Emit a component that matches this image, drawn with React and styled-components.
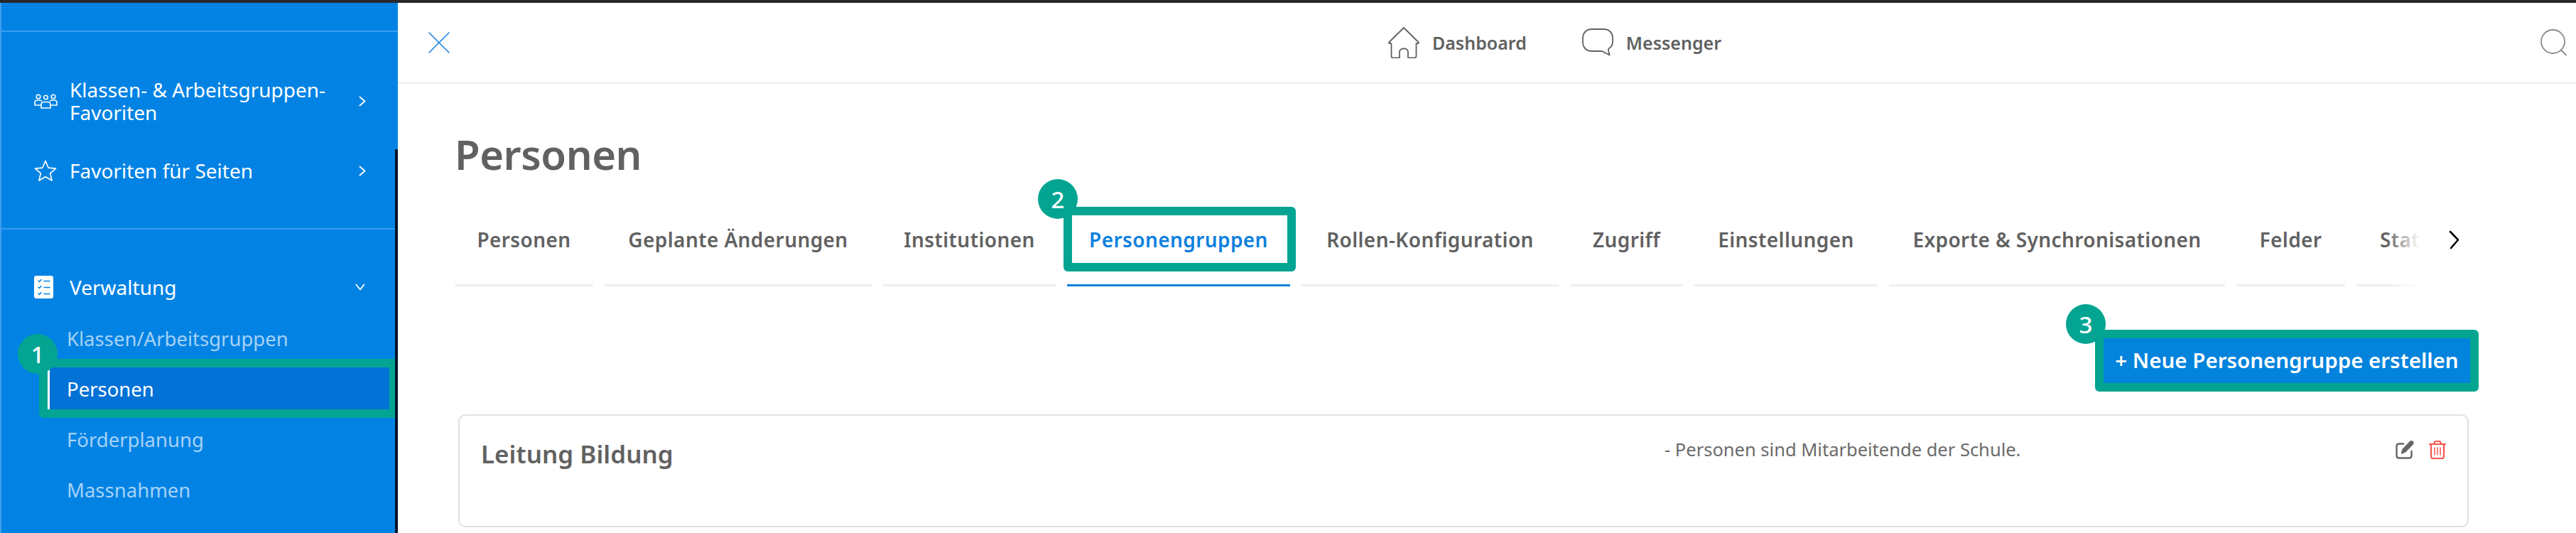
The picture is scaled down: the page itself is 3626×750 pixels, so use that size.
import React from "react";
import styled, { createGlobalStyle } from "styled-components";

const Global = createGlobalStyle`
  html, body { margin: 0; padding: 0; background: #fff; }
  body { width: 3626px; height: 750px; overflow: hidden; font-family: "Noto Sans", "Open Sans", sans-serif; }
  * { box-sizing: border-box; }
`;

const GREEN = "#03a592";
const INK = "#616161";
const BLUE = "#0283e4";

const Page = styled.div`
  width: 3626px; height: 750px; display: flex; flex-direction: column; overflow: hidden;
`;
const TopEdge = styled.div`height: 4px; background: #26282b; flex: none;`;
const Body = styled.div`flex: 1; display: flex; min-height: 0;`;

const Sidebar = styled.aside`
  width: 560px; flex: none; background: ${BLUE}; color: #fff; position: relative;
  border-left: 2px solid #3f9eec; padding-top: 39px; overflow: hidden;
  &::after { content: ""; position: absolute; right: 0; top: 206px; bottom: 0; width: 4px; background: #02142b; }
`;
const Rule = styled.div`height: 2px; background: #3a9cec; margin: ${p => p.$m};`;
const NavRow = styled.div`
  display: flex; align-items: center; height: ${p => p.$h}px; margin-bottom: ${p => p.$mb || 0}px;
  padding-left: 46px; font-size: 28px; line-height: 32px; white-space: nowrap;
`;
const NavIcon = styled.span`width: 50px; flex: none; display: flex; align-items: center;`;
const NavLabel = styled.span`width: ${p => p.$w}px; flex: none;`;
const Arrow = styled.span`display: flex;`;
const SubList = styled.div`display: flex; flex-direction: column; gap: 12px; margin: 26px 12px 0 65px;`;
const SubItem = styled.div`
  position: relative; height: 59px; display: flex; align-items: center; padding: 1px 0 0 27px;
  font-size: 27.5px; white-space: nowrap; color: ${p => p.$active ? "#fff" : "#a6d2f6"};
  ${p => p.$active ? "background: #0272d6; box-shadow: inset 3px 0 0 #fff;" : ""}
`;

const Main = styled.main`flex: 1; min-width: 0; display: flex; flex-direction: column;`;
const Header = styled.header`
  height: 114px; flex: none; border-bottom: 3px solid #f1f1f1; display: flex; align-items: center;
  padding: 0 13px 0 43px; justify-content: space-between;
`;
const HeaderNav = styled.nav`display: flex; align-items: center; gap: 78px; margin-left: 168px;`;
const HeaderLink = styled.a`
  display: flex; align-items: center; gap: 18px; font-size: 25px; font-weight: 600; color: ${INK};
`;
const Content = styled.div`padding: 0 151px 0 80px; flex: 1; min-height: 0;`;
const Title = styled.h1`
  margin: 60px 0 0; font-size: 58px; line-height: 78px; font-weight: 600; color: ${INK}; letter-spacing: -0.5px;
`;
const TabBar = styled.div`display: flex; align-items: flex-start; margin-top: -7px; position: relative;`;
const TabTrack = styled.div`
  display: flex; gap: 16px; width: 2771px; flex: none; overflow: hidden; position: relative; padding-top: 50px;
  &::after { content: ""; position: absolute; right: 0; top: 0; bottom: 0; width: 52px; background: linear-gradient(to right, rgba(255,255,255,0), #fff 90%); }
`;
const Tab = styled.div`
  position: relative; flex: none; height: 104px; display: flex; align-items: center;
  width: ${p => p.$w}px; justify-content: ${p => p.$clipped ? "flex-start" : "center"};
  padding: 0 ${p => p.$clipped ? "33px" : "0"} 26px;
  font-size: 28px; font-weight: 600; letter-spacing: 0.4px; white-space: nowrap;
  color: ${p => p.$active ? "#0c80de" : INK};
  border-bottom: 3px solid ${p => p.$active ? "#0c80de" : "#efefef"};
`;
const TabArrow = styled.span`display: flex; margin: 75px 0 0 36px;`;
const ButtonRow = styled.div`display: flex; justify-content: flex-end; margin-top: 73px; margin-right: -2px;`;
const PrimaryButton = styled.button`
  position: relative; border: 0; width: 516px; height: 63px; background: #0283dc; color: #fff;
  font: 600 29.5px "Noto Sans", sans-serif; padding: 0 0 3px; white-space: nowrap;
`;
const Card = styled.section`
  margin: 44px 0 0 5px; height: 159px; border: 2px solid #e0e0e0; border-radius: 10px; padding: 29px 30px 0 30px;
  display: grid; grid-template-columns: 1666px 1fr auto; align-items: start;
`;
const CardTitle = styled.h2`margin: 0; font-size: 35px; line-height: 50px; font-weight: 600; color: ${INK};`;
const CardNote = styled.p`margin: 0; font-size: 25.5px; line-height: 36px; color: #6a6a6a;`;
const CardActions = styled.div`display: flex; gap: 21px; margin-top: 6px;`;

const Highlight = styled.span`
  position: absolute; top: ${p => p.$t ?? -12}px; bottom: ${p => p.$b ?? -12}px; left: ${p => p.$l ?? -12}px; right: ${p => p.$r ?? -12}px;
  border: 12px solid ${GREEN}; border-radius: 6px; pointer-events: none;
`;
const Badge = styled.span`
  position: absolute; width: 56px; height: 56px; border-radius: 50%; background: ${GREEN}; color: #fff;
  left: ${p => p.$x}px; top: ${p => p.$y}px; display: flex; align-items: center; justify-content: center;
  font: 500 33px "Noto Sans", sans-serif; letter-spacing: 0; z-index: 2;
`;

const Stroke = ({ w, h, color = "#fff", sw = 2, children }) => (
  <svg width={w} height={h} viewBox={`0 0 ${w} ${h}`} fill="none" stroke={color} strokeWidth={sw} strokeLinecap="round" strokeLinejoin="round">{children}</svg>
);

const GroupIcon = () => (
  <Stroke w={33} h={21} sw={1.6}>
    <circle cx="6" cy="4" r="2.8" /><circle cx="16.5" cy="5" r="2.8" /><circle cx="27" cy="4" r="2.8" />
    <path d="M1 16v-4c0-2 1.5-3 3.5-3H8c1 0 1.800.3 2.400.8M32 16v-4c0-2-1.500-3-3.500-3H25c-1 0-1.800.3-2.400.8M1 16h9M32 16h-9" />
    <path d="M10 20v-5c0-2 1.500-3.500 3.500-3.500h6c2 0 3.500 1.500 3.500 3.500v5z" />
  </Stroke>
);
const StarIcon = () => (
  <Stroke w={32} h={30} sw={1.7}>
    <path d="M16 1.500l4.200 9.600 10.300 1-7.800 6.800 2.400 10.100L16 23.700 6.900 29l2.400-10.100L1.500 12.100l10.300-1z" />
  </Stroke>
);
const ListIcon = () => (
  <svg width="27" height="32" viewBox="0 0 27 32">
    <rect width="27" height="32" rx="3" fill="#fff" />
    <g fill="none" stroke={BLUE} strokeWidth="1.500" strokeLinecap="round">
      <path d="M6 7l1.500 1.500L10 5.500M6 16l1.500 1.500L10 14.500M6 25l1.500 1.500L10 23.500" />
      <path d="M14 7.500h8M14 16.500h8M14 25.500h8" />
    </g>
  </svg>
);
const ChevronRight = () => <Stroke w={10} h={15} sw={1.8}><path d="M1.500 1.500l7 6-7 6" /></Stroke>;
const ChevronDown = () => <Stroke w={14} h={10} sw={1.8}><path d="M1.500 1.500l5.500 7 5.500-7" /></Stroke>;

const CloseIcon = () => <Stroke w={30} h={30} color="#1a84de" sw={1.600}><path d="M1 1l28 28M29 1L1 29" /></Stroke>;
const HomeIcon = () => (
  <Stroke w={44} h={44} color={INK} sw={1.800}>
    <path d="M22 1L1.200 21.500c-.5.8 0 1.500.8 1.500H4.500v18c0 1.500 1 2.500 2.500 2.500h9v-8c0-7 12-7 12 0v8h9c1.500 0 2.500-1 2.500-2.500V23H42c.8 0 1.300-.7.800-1.500z" />
  </Stroke>
);
const BubbleIcon = () => (
  <Stroke w={44} h={39} color={INK} sw={1.800}>
    <path d="M14 1h16c8 0 13 5 13 13v5c0 4-2 7-5 9-1 .7-1.500 1.500-1 3l1.500 6.500L28 32H14C6 32 1 27 1 19v-5C1 6 6 1 14 1z" />
  </Stroke>
);
const SearchIcon = () => (
  <Stroke w={37} h={38} color="#8a8a8a" sw={1.800}>
    <circle cx="17.500" cy="17.500" r="16.500" /><path d="M29 29.500l7 7" />
  </Stroke>
);
const TabChevron = () => <Stroke w={16} h={27} color="#000" sw={2.600}><path d="M2 2l11 11.500L3 25" /></Stroke>;
const EditIcon = () => (
  <Stroke w={26} h={26} color="#666" sw={2.400}>
    <path d="M11 4.500H5c-2 0-3.500 1.500-3.500 3.500v13c0 2 1.500 3.500 3.500 3.500h14c2 0 3.500-1.500 3.500-3.500v-6" />
    <path d="M9 17.500l1.500-5L20.500 2c1-1 2.500-1 3.300-.2s.8 2.200-.2 3.200L13.500 15.500z" fill="#666" />
  </Stroke>
);
const TrashIcon = () => (
  <Stroke w={24} h={26} color="#f5554f" sw={2.200}>
    <path d="M1 5h22M7.500 5V3.500C7.500 2 8.500 1 10 1h4c1.500 0 2.500 1 2.500 2.500V5" />
    <path d="M3 5v17c0 2 1.500 3 3 3h12c1.500 0 3-1 3-3V5" />
    <path d="M8 10v10M12 10v10M16 10v10" strokeWidth={1.500} />
  </Stroke>
);

const tabs = [
  ["Personen", 195], ["Geplante Änderungen", 376], ["Institutionen", 243], ["Personengruppen", 314],
  ["Rollen-Konfiguration", 362], ["Zugriff", 159], ["Einstellungen", 258], ["Exporte & Synchronisationen", 473],
  ["Felder", 153], ["Statistiken", 300],
];

export default function App() {
  return (
    <Page>
      <Global />
      <TopEdge />
      <Body>
        <Sidebar>
          <Rule $m="0 0 65px" />
          <NavRow $h={64} $mb={50}>
            <NavIcon><GroupIcon /></NavIcon>
            <NavLabel $w={407}>Klassen- &amp; Arbeitsgruppen-<br />Favoriten</NavLabel>
            <Arrow><ChevronRight /></Arrow>
          </NavRow>
          <NavRow $h={32}>
            <NavIcon><StarIcon /></NavIcon>
            <NavLabel $w={407}>Favoriten für Seiten</NavLabel>
            <Arrow><ChevronRight /></Arrow>
          </NavRow>
          <Rule $m="65px 0" />
          <NavRow $h={32}>
            <NavIcon><ListIcon /></NavIcon>
            <NavLabel $w={402}>Verwaltung</NavLabel>
            <Arrow><ChevronDown /></Arrow>
          </NavRow>
          <SubList>
            <SubItem>Klassen/Arbeitsgruppen</SubItem>
            <SubItem $active>
              Personen
              <Highlight />
              <Badge $x={-42} $y={-47}>1</Badge>
            </SubItem>
            <SubItem>Förderplanung</SubItem>
            <SubItem>Massnahmen</SubItem>
            <SubItem>Lernende</SubItem>
          </SubList>
        </Sidebar>
        <Main>
          <Header>
            <CloseIcon />
            <HeaderNav>
              <HeaderLink><HomeIcon />Dashboard</HeaderLink>
              <HeaderLink><BubbleIcon />Messenger</HeaderLink>
            </HeaderNav>
            <SearchIcon />
          </Header>
          <Content>
            <Title>Personen</Title>
            <TabBar>
              <TabTrack>
                {tabs.map(([t, w]) => (
                  <Tab key={t} $w={w} $active={t === "Personengruppen"} $clipped={t === "Statistiken"}>
                    {t}
                    {t === "Personengruppen" && (
                      <>
                        <Highlight $t={-8} $b={18} $l={-5} $r={-8} />
                        <Badge $x={-41} $y={-47}>2</Badge>
                      </>
                    )}
                  </Tab>
                ))}
              </TabTrack>
              <TabArrow><TabChevron /></TabArrow>
            </TabBar>
            <ButtonRow>
              <PrimaryButton>
                + Neue Personengruppe erstellen
                <Highlight />
                <Badge $x={-53} $y={-48}>3</Badge>
              </PrimaryButton>
            </ButtonRow>
            <Card>
              <CardTitle>Leitung Bildung</CardTitle>
              <CardNote>- Personen sind Mitarbeitende der Schule.</CardNote>
              <CardActions><EditIcon /><TrashIcon /></CardActions>
            </Card>
          </Content>
        </Main>
      </Body>
    </Page>
  );
}
